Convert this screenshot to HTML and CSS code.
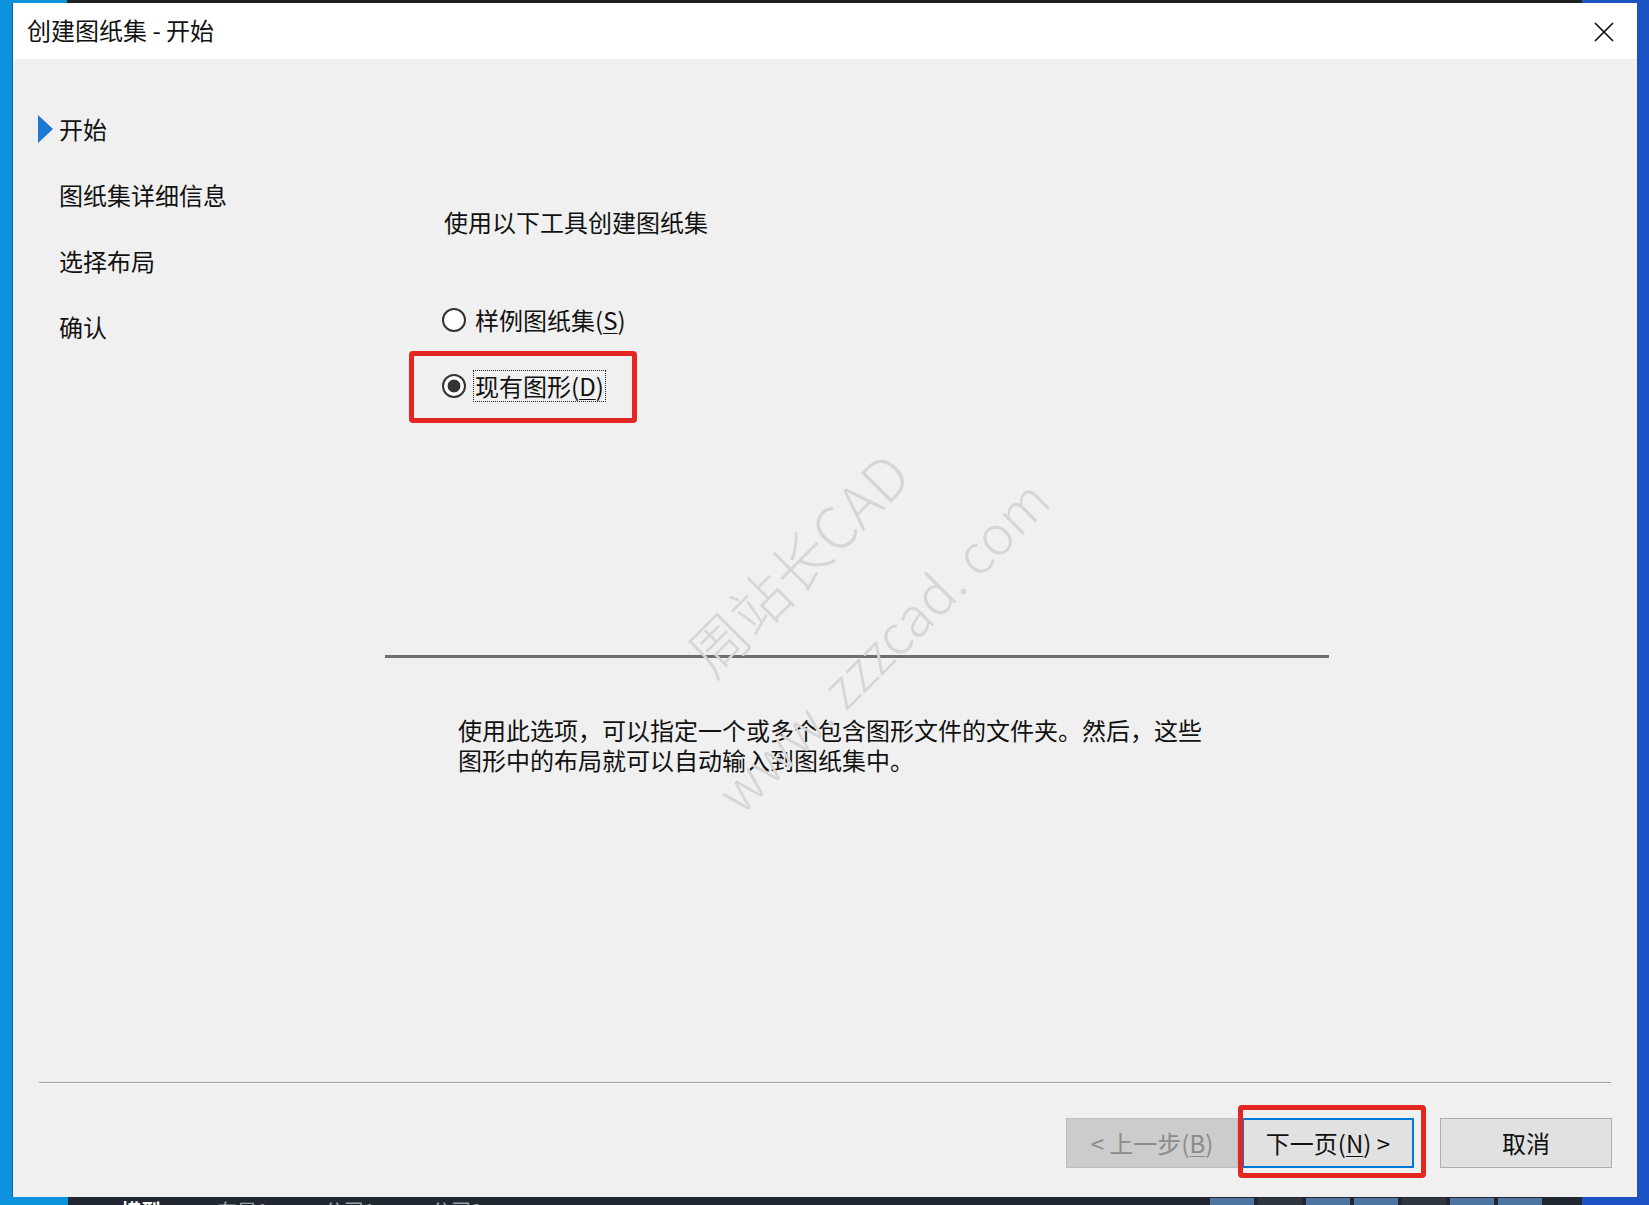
FILE: index.html
```html
<!DOCTYPE html>
<html lang="zh-CN">
<head>
    <meta charset="UTF-8">
    <title>创建图纸集 - 开始</title>
    <link rel="stylesheet" href="styles.css">
</head>
<body>
    <div class="desktop">
        <div class="topbar"><span class="app-edge"></span></div>

        <div class="dialog">
            <div class="titlebar">
                <span class="title">创建图纸集 - 开始</span>
                <svg class="close" width="20" height="20" viewBox="0 0 20 20">
                    <path d="M1 1 L19 19 M19 1 L1 19" stroke="#111" stroke-width="1.7" fill="none"/>
                </svg>
            </div>

            <div class="dlg-body">
                <div class="content">
                    <!-- wizard steps -->
                    <ul class="steps">
                        <li class="current">开始</li>
                        <li>图纸集详细信息</li>
                        <li>选择布局</li>
                        <li>确认</li>
                    </ul>

                    <div class="page">
                        <p class="heading">使用以下工具创建图纸集</p>
                        <div class="options">
                            <div class="radio">
                                <span class="dot"></span>
                                <span class="label">样例图纸集(<u>S</u>)</span>
                            </div>
                            <div class="radio checked marked">
                                <span class="dot"></span>
                                <span class="label focus">现有图形(<u>D</u>)</span>
                            </div>
                        </div>
                        <div class="rule"></div>
                        <p class="desc">使用此选项，可以指定一个或多个包含图形文件的文件夹。然后，这些<br>图形中的布局就可以自动输入到图纸集中。</p>
                    </div>
                </div>

                <div class="footer">
                    <div class="etched"></div>
                    <div class="buttons">
                        <button class="btn disabled">&lt; 上一步(<u>B</u>)</button>
                        <button class="btn default marked">下一页(<u>N</u>) &gt;</button>
                        <button class="btn cancel">取消</button>
                    </div>
                </div>

                <!-- site watermark -->
                <div class="watermark">
                    <div class="wm-name">周站长CAD</div>
                    <div class="wm-url">www. zzzcad. com</div>
                </div>
            </div>
        </div>

        <div class="taskbar">
            <span class="tab active">模型</span>
            <span class="tab">布局1</span>
            <span class="tab">公司1</span>
            <span class="tab">公司2</span>
            <span class="status">
                <i class="on"></i><i></i><i class="on"></i><i class="on"></i><i></i><i class="on"></i><i class="on"></i>
            </span>
        </div>
    </div>
</body>
</html>
```

FILE: styles.css
```css
/* Page and desktop */
body {
    margin: 0;
    font-family: "Noto Sans CJK SC", "Microsoft YaHei", sans-serif;
    color: #111;
    background: linear-gradient(to right, #0a92dc 0, #0a92dc 50%, #1c52c4 50%);
}

.desktop {
    width: 1649px;
    height: 1205px;
    display: flex;
    flex-direction: column;
    overflow: hidden;
}

.topbar {
    height: 3px;
    display: flex;
}

.app-edge {
    margin-left: 67px;
    width: 1515px;
    background-color: #1f1f1f;
}

/* Dialog window */
.dialog {
    margin-left: 12px;
    width: 1625px;
    height: 1194px;
    display: flex;
    flex-direction: column;
    border-left: 1px solid #1d5d9a;
    box-sizing: border-box;
}

.titlebar {
    height: 56px;
    background-color: #fff;
    display: flex;
    align-items: center;
    justify-content: space-between;
    padding: 0 23px 0 14px;
}

.title {
    font-size: 24px;
    line-height: 30px;
    margin-bottom: 2px;
}

.close {
    display: block;
    margin-top: 1px;
}

.dlg-body {
    flex: 1;
    background-color: #f0f0f0;
    display: flex;
    flex-direction: column;
    position: relative;
}

.content {
    flex: 1;
    display: flex;
}

/* Steps list */
.steps {
    list-style: none;
    margin: 0;
    width: 372px;
    padding: 37px 0 0 46px;
    box-sizing: border-box;
}

.steps li {
    position: relative;
    font-size: 24px;
    line-height: 66px;
}

.steps li.current::before {
    content: "";
    position: absolute;
    left: -21px;
    top: 19px;
    border-left: 15px solid #1a79d2;
    border-top: 14px solid transparent;
    border-bottom: 14px solid transparent;
}

/* Page content */
.page {
    width: 944px;
    padding-top: 148px;
}

.heading {
    margin: 0 0 0 59px;
    font-size: 24px;
    line-height: 30px;
}

.options {
    margin: 65px 0 0 57px;
}

.radio {
    display: flex;
    align-items: center;
    gap: 7px;
    height: 36px;
    font-size: 24px;
    width: fit-content;
}

.radio + .radio {
    margin-top: 30px;
}

.dot {
    width: 24px;
    height: 24px;
    border: 2px solid #333;
    border-radius: 50%;
    background-color: #fff;
    box-sizing: border-box;
}

.radio.checked .dot {
    background: radial-gradient(circle, #333 0, #333 6px, #fff 6.8px);
}

.label {
    line-height: 30px;
    padding: 0 1px;
    border: 1px solid transparent;
}

.label.focus {
    border: 1px dotted #222;
}

u {
    text-underline-offset: 3px;
    text-decoration-thickness: 1px;
}

/* red annotation boxes */
.marked {
    position: relative;
}

.radio.marked::after {
    content: "";
    position: absolute;
    top: -17px;
    left: -33px;
    right: -31px;
    bottom: -19px;
    border: 5px solid #e3261f;
    border-radius: 4px;
}

.rule {
    margin-top: 251px;
    height: 3px;
    background-color: #6e6e6e;
}

.desc {
    margin: 57px 0 0 73px;
    font-size: 24px;
    line-height: 30px;
}

/* Footer */
.footer {
    height: 115px;
}

.etched {
    margin: 0 26px;
    border-top: 1px solid #a0a0a0;
    border-bottom: 1px solid #fff;
}

.buttons {
    display: flex;
    justify-content: flex-end;
    padding: 34px 25px 0 0;
}

.btn {
    width: 172px;
    height: 50px;
    font-family: inherit;
    font-size: 24px;
    color: #111;
    background-color: #e1e1e1;
    border: 1px solid #adadad;
    padding: 0 0 2px;
}

.btn.disabled {
    background-color: #cccccc;
    border-color: #bfbfbf;
    color: #8b8b8b;
}

.btn.default {
    margin-left: 4px;
    border: 2px solid #0078d7;
}

.btn.cancel {
    margin-left: 26px;
}

.btn.marked::after {
    content: "";
    position: absolute;
    top: -15px;
    left: -6px;
    right: -14px;
    bottom: -12px;
    border: 5px solid #e3261f;
    border-radius: 4px;
}

/* Watermark */
.watermark {
    position: absolute;
    left: 525px;
    top: 445px;
    width: 600px;
    height: 200px;
    transform: rotate(-45deg);
    text-align: center;
    color: #d6d6d6;
    font-weight: 300;
    pointer-events: none;
}

.wm-name {
    font-size: 58px;
    line-height: 82px;
}

.wm-url {
    margin-top: 41px;
    padding-left: 4px;
    font-size: 54px;
    line-height: 72px;
}

/* Bottom strip of the app behind */
.taskbar {
    height: 8px;
    margin-left: 68px;
    width: 1514px;
    background-color: #222831;
    display: flex;
    overflow: hidden;
    font-size: 20px;
    line-height: 24px;
    color: #9aa0a8;
}

.tab {
    margin-top: 2px;
    padding: 0 28px;
}

.tab.active {
    color: #fff;
    font-weight: bold;
    padding-left: 53px;
}

.status {
    display: flex;
    gap: 4px;
    margin-left: auto;
    margin-top: 1px;
    margin-right: 40px;
}

.status i {
    width: 44px;
    background-color: #2e3540;
}

.status i.on {
    background-color: #4f76a0;
}
```
